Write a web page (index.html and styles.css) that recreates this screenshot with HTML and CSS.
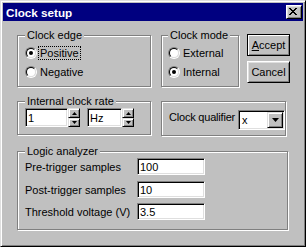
FILE: index.html
```html
<!DOCTYPE html>
<html lang="en">
<head>
    <meta charset="UTF-8">
    <title>Clock setup</title>
    <link rel="stylesheet" href="styles.css">
</head>
<body>
    <div class="window">
        <div class="titlebar">
            <span class="title">Clock setup</span>
            <span class="close">
                <svg width="8" height="7" viewBox="0 0 8 7" shape-rendering="crispEdges">
                    <path d="M0 0h2v1H0zM6 0h2v1H6zM1 1h2v1H1zM5 1h2v1H5zM2 2h4v1H2zM3 3h2v1H3zM2 4h4v1H2zM1 5h2v1H1zM5 5h2v1H5zM0 6h2v1H0zM6 6h2v1H6z" fill="#000"/>
                </svg>
            </span>
        </div>
        <div class="body">
            <div class="row">
                <fieldset class="group edge">
                    <legend>Clock edge</legend>
                    <div class="radio-row">
                        <span class="radio checked"><span class="radio-in"></span></span>
                        <span class="label focus">Positive</span>
                    </div>
                    <div class="radio-row">
                        <span class="radio"><span class="radio-in"></span></span>
                        <span class="label">Negative</span>
                    </div>
                </fieldset>
                <fieldset class="group mode">
                    <legend>Clock mode</legend>
                    <div class="radio-row">
                        <span class="radio"><span class="radio-in"></span></span>
                        <span class="label">External</span>
                    </div>
                    <div class="radio-row">
                        <span class="radio checked"><span class="radio-in"></span></span>
                        <span class="label">Internal</span>
                    </div>
                </fieldset>
                <div class="buttons">
                    <button class="btn default"><u>A</u>ccept</button>
                    <button class="btn">Cancel</button>
                </div>
            </div>
            <div class="row row-mid">
                <fieldset class="group rate">
                    <legend>Internal clock rate</legend>
                    <div class="spins">
                        <div class="spin">
                            <span class="sunken field field-num">1</span>
                            <span class="arrows">
                                <span class="arrow-btn up"><svg width="5" height="3" viewBox="0 0 5 3"><path d="M2.5 0L5 3H0z" fill="#000"/></svg></span>
                                <span class="arrow-btn down"><svg width="5" height="3" viewBox="0 0 5 3"><path d="M0 0h5L2.5 3z" fill="#000"/></svg></span>
                            </span>
                        </div>
                        <div class="spin">
                            <span class="sunken field field-unit">Hz</span>
                            <span class="arrows">
                                <span class="arrow-btn up"><svg width="5" height="3" viewBox="0 0 5 3"><path d="M2.5 0L5 3H0z" fill="#000"/></svg></span>
                                <span class="arrow-btn down"><svg width="5" height="3" viewBox="0 0 5 3"><path d="M0 0h5L2.5 3z" fill="#000"/></svg></span>
                            </span>
                        </div>
                    </div>
                </fieldset>
                <fieldset class="group qual">
                    <span class="qual-label">Clock qualifier</span>
                    <div class="sunken combo">
                        <span class="combo-val">x</span>
                        <span class="combo-btn"><svg width="7" height="4" viewBox="0 0 7 4"><path d="M0 0h7L3.5 4z" fill="#000"/></svg></span>
                    </div>
                </fieldset>
            </div>
            <fieldset class="group logic">
                <legend>Logic analyzer</legend>
                <div class="field-row">
                    <span class="flabel">Pre-trigger samples</span>
                    <span class="sunken edit">100</span>
                </div>
                <div class="field-row">
                    <span class="flabel">Post-trigger samples</span>
                    <span class="sunken edit">10</span>
                </div>
                <div class="field-row">
                    <span class="flabel">Threshold voltage (V)</span>
                    <span class="sunken edit">3.5</span>
                </div>
            </fieldset>
        </div>
    </div>
</body>
</html>
```

FILE: styles.css
```css
* {
    margin: 0;
    padding: 0;
    box-sizing: border-box;
}
body {
    font-family: "Liberation Sans", Arial, sans-serif;
    font-size: 11px;
    color: #000;
    background: #c0c0c0;
}
.window {
    width: 306px;
    height: 247px;
    background: #c0c0c0;
    border: 1px solid;
    border-color: #dfdfdf #000 #000 #dfdfdf;
    box-shadow: inset 1px 1px #fff, inset -1px -1px #808080;
    padding: 2px;
}
.titlebar {
    height: 18px;
    background: #000080;
    color: #fff;
    display: flex;
    align-items: center;
    padding: 0 1px 0 3px;
}
.title {
    flex: 1;
    font-weight: bold;
    font-size: 11.7px;
}
.close {
    width: 16px;
    height: 14px;
    background: #c0c0c0;
    border: 1px solid;
    border-color: #fff #000 #000 #fff;
    box-shadow: inset 1px 1px #dfdfdf, inset -1px -1px #808080;
    display: flex;
    padding: 2px 0 0 2px;
}
.close svg {
    display: block;
}
.body {
    padding: 8px 0 0 14px;
}
.row {
    display: flex;
    align-items: flex-start;
}
.row-mid {
    margin-top: 8px;
}

/* group boxes */
.group {
    border: 1px solid #808080;
    box-shadow: inset 1px 1px #fff, 1px 1px #fff;
    min-width: 0;
}
.group legend {
    background: #c0c0c0;
    padding: 0 2px;
    line-height: 13px;
}
.edge {
    width: 134px;
    padding: 1px 0 5px 7px;
}
.mode {
    width: 78px;
    margin-left: 10px;
    padding: 1px 0 5px 6px;
}
.radio-row {
    height: 19px;
    display: flex;
    align-items: center;
}
.radio {
    flex: none;
    width: 12px;
    height: 12px;
    border-radius: 50%;
    border: 1px solid;
    border-color: #808080 #fff #fff #808080;
}
.radio-in {
    display: flex;
    align-items: center;
    justify-content: center;
    width: 10px;
    height: 10px;
    border-radius: 50%;
    border: 1px solid;
    border-color: #000 #dfdfdf #dfdfdf #000;
    background: #fff;
}
.radio.checked .radio-in::after {
    content: "";
    width: 4px;
    height: 4px;
    border-radius: 50%;
    background: #000;
}
.label {
    margin-left: 1px;
    padding: 0 1px;
    border: 1px dotted transparent;
    line-height: 12px;
}
.label.focus {
    border-color: #000;
}

/* buttons */
.buttons {
    margin: 5px 0 0 8px;
    display: flex;
    flex-direction: column;
    gap: 5px;
}
.btn {
    width: 43px;
    height: 22px;
    font: inherit;
    color: #000;
    background: #c0c0c0;
    border: 1px solid;
    border-color: #fff #000 #000 #fff;
    box-shadow: inset 1px 1px #dfdfdf, inset -1px -1px #808080;
}
.btn.default {
    border-color: #000;
    box-shadow: inset 1px 1px #fff, inset -1px -1px #808080;
}

/* fields */
.sunken {
    background: #fff;
    border: 1px solid;
    border-color: #808080 #fff #fff #808080;
    box-shadow: inset 1px 1px #000, inset -1px -1px #dfdfdf;
}
.rate {
    width: 134px;
    padding: 0 0 7px 7px;
}
.spins {
    display: flex;
    gap: 7px;
}
.spin {
    display: flex;
    height: 19px;
}
.field {
    display: flex;
    align-items: center;
    padding-left: 2px;
}
.field-num {
    width: 43px;
}
.field-unit {
    width: 35px;
}
.arrows {
    width: 12px;
    display: flex;
    flex-direction: column;
}
.arrow-btn {
    display: flex;
    align-items: center;
    justify-content: center;
    background: #c0c0c0;
    border: 1px solid;
    border-color: #dfdfdf #000 #000 #dfdfdf;
    box-shadow: inset 1px 1px #fff, inset -1px -1px #808080;
}
.arrow-btn.up {
    height: 10px;
}
.arrow-btn.down {
    height: 9px;
}
.arrow-btn svg {
    display: block;
}
.qual {
    width: 125px;
    height: 35px;
    margin: 6px 0 0 10px;
    padding: 8px 0 0 7px;
    display: flex;
    align-items: flex-start;
}
.qual-label {
    flex: none;
    white-space: nowrap;
    line-height: 14px;
    letter-spacing: -0.2px;
}
.combo {
    flex: none;
    margin-left: auto;
    width: 47px;
    height: 20px;
    padding: 1px;
    display: flex;
    align-items: center;
}
.combo-val {
    flex: 1;
    padding-left: 2px;
}
.combo-btn {
    width: 16px;
    height: 16px;
    display: flex;
    align-items: center;
    justify-content: center;
    background: #c0c0c0;
    border: 1px solid;
    border-color: #dfdfdf #000 #000 #dfdfdf;
    box-shadow: inset 1px 1px #fff, inset -1px -1px #808080;
}
.combo-btn svg {
    display: block;
}
.logic {
    width: 271px;
    margin-top: 9px;
    padding: 0 0 9px 7px;
}
.field-row {
    display: flex;
    align-items: center;
    height: 17px;
}
.field-row + .field-row {
    margin-top: 6px;
}
.field-row:last-child {
    margin-top: 5px;
}
.flabel {
    width: 112px;
}
.edit {
    width: 68px;
    height: 17px;
    display: flex;
    align-items: center;
    padding-left: 2px;
}
```
